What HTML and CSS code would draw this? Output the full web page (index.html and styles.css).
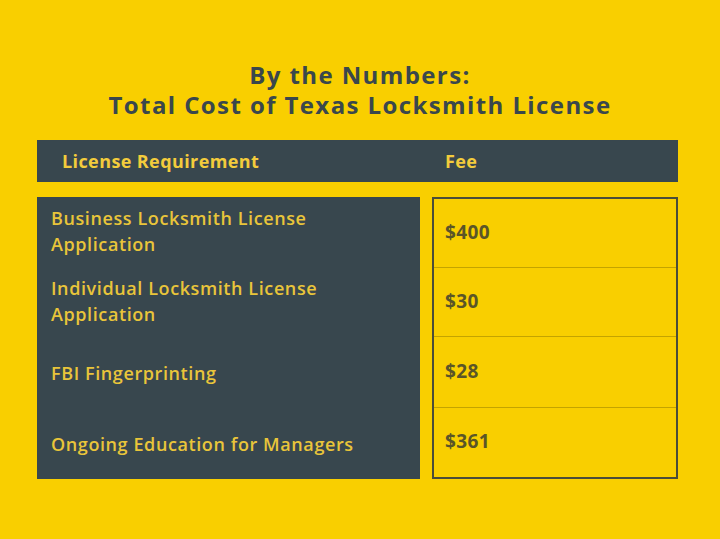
FILE: index.html
```html
<!DOCTYPE html>
<html>
<head>
<meta charset="utf-8">
<link rel="stylesheet" href="styles.css">
</head>
<body>
<div class="page">
  <h1 class="title"><span class="title-line">By the Numbers:</span><span class="title-line">Total Cost of Texas Locksmith License</span></h1>
  <div class="head-bar">
    <div class="head-req">License Requirement</div>
    <div class="head-fee">Fee</div>
  </div>
  <div class="table">
    <div class="req-col">
      <div class="req">Business Locksmith License<br>Application</div>
      <div class="req">Individual Locksmith License<br>Application</div>
      <div class="req">FBI Fingerprinting</div>
      <div class="req">Ongoing Education for Managers</div>
    </div>
    <div class="fee-col">
      <div class="fee">$400</div>
      <div class="fee">$30</div>
      <div class="fee">$28</div>
      <div class="fee">$361</div>
    </div>
  </div>
</div>
</body>
</html>
```
FILE: styles.css
```css
html, body {
  margin: 0;
  padding: 0;
}
body {
  background: #f9cf00;
  width: 720px;
  height: 539px;
  overflow: hidden;
}
.page {
  padding: 61px 42px 0 37px;
}
.title {
  margin: 0;
  display: flex;
  flex-direction: column;
  align-items: center;
  row-gap: 2px;
  font-family: "Open Sans", sans-serif;
  font-weight: 700;
  font-size: 24px;
  letter-spacing: 1.4px;
  line-height: 28px;
  color: #3a474c;
  padding-left: 5px;
}
.title-line {
  display: block;
}
.head-bar {
  margin-top: 21px;
  height: 42px;
  background: #38474e;
  display: flex;
  align-items: center;
  font-family: "Open Sans", sans-serif;
  font-weight: 700;
  font-size: 18px;
  letter-spacing: 0.4px;
  color: #f3cc3c;
}
.head-req {
  padding-left: 25px;
  width: 383px;
}
.table {
  margin-top: 15px;
  display: grid;
  grid-template-columns: 383px 246px;
  column-gap: 12px;
  height: 282px;
}
.req-col {
  background: #38474e;
  display: grid;
  grid-template-rows: 68px 72px 71px 71px;
  font-family: "Open Sans", sans-serif;
  font-weight: 600;
  font-size: 18px;
  letter-spacing: 0.6px;
  line-height: 26px;
  color: #e9c53a;
}
.req {
  display: flex;
  align-items: center;
  padding-left: 14px;
}
.fee-col {
  border: 2px solid #4a4d3a;
  display: grid;
  grid-template-rows: 69px 69px 71px 1fr;
  font-family: "Open Sans", sans-serif;
  font-weight: 700;
  font-size: 19px;
  letter-spacing: 0.4px;
  color: #5a5528;
}
.fee {
  display: flex;
  align-items: center;
  padding-left: 11px;
  padding-bottom: 3px;
  border-bottom: 1px solid #c4a400;
}
.fee:last-child {
  border-bottom: none;
}
```
